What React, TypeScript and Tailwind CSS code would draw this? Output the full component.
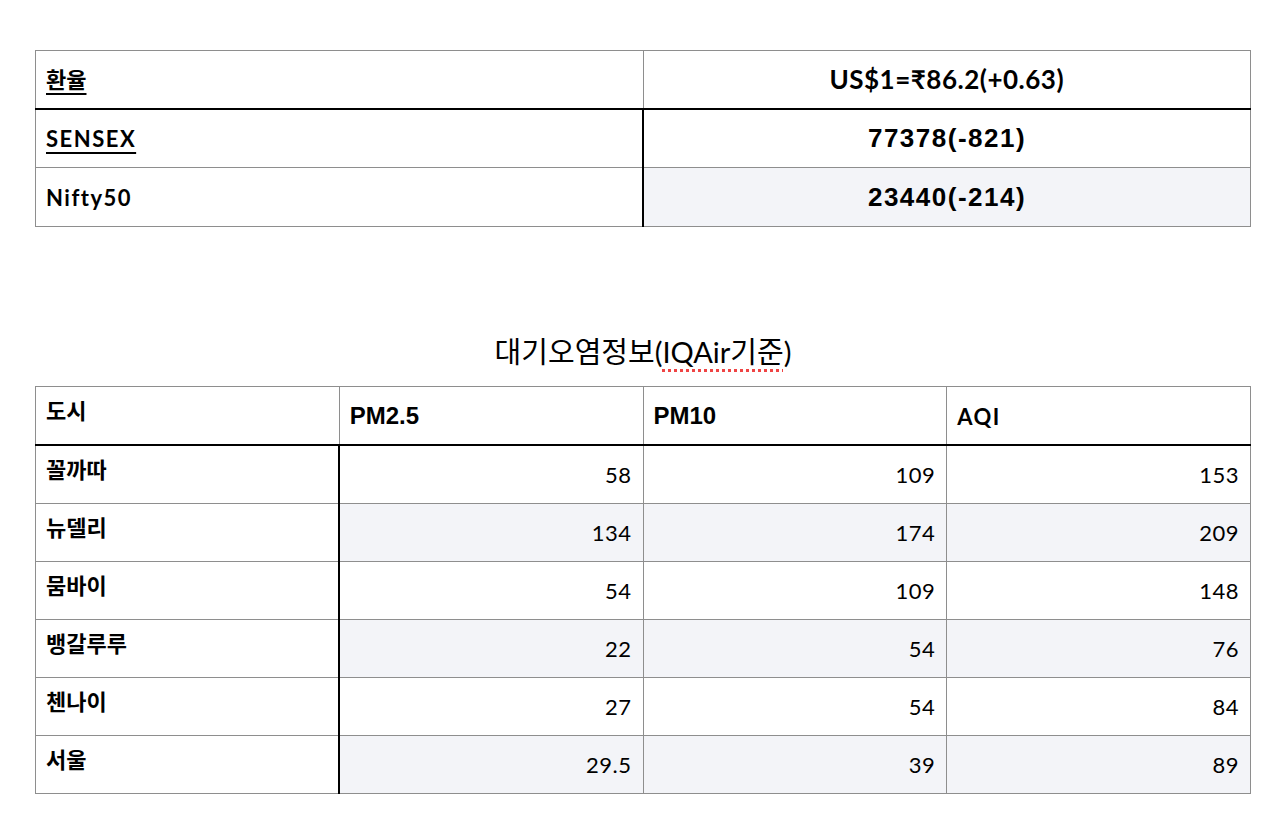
const kr = "font-['Lato','Noto_Sans_CJK_KR',sans-serif]";

const rates = [
  { label: "환율", value: "US$1=₹86.2(+0.63)", link: true, latin: false, h: "h-[58px]", cls: "font-['Lato','DejaVu_Sans',sans-serif] font-bold text-[26px] tracking-[0.5px]" },
  { label: "SENSEX", value: "77378(-821)", link: true, latin: true, h: "h-[59px]", cls: "font-['Liberation_Sans',sans-serif] font-bold text-[26px] tracking-[1.5px]" },
  { label: "Nifty50", value: "23440(-214)", link: false, latin: true, h: "h-[59px]", cls: "font-['Liberation_Sans',sans-serif] font-bold text-[26px] tracking-[1.5px]" },
];

const air = [
  { city: "꼴까따", pm25: "58", pm10: "109", aqi: "153" },
  { city: "뉴델리", pm25: "134", pm10: "174", aqi: "209" },
  { city: "뭄바이", pm25: "54", pm10: "109", aqi: "148" },
  { city: "뱅갈루루", pm25: "22", pm10: "54", aqi: "76" },
  { city: "첸나이", pm25: "27", pm10: "54", aqi: "84" },
  { city: "서울", pm25: "29.5", pm10: "39", aqi: "89" },
];

const heads = [
  { h: "PM2.5", cls: "font-['Liberation_Sans',sans-serif] text-[24px]" },
  { h: "PM10", cls: "font-['Liberation_Sans',sans-serif] text-[24px]" },
  { h: "AQI", cls: "text-[22px] tracking-[1.5px]" },
];

export default function App() {
  return (
    <div className={`min-h-screen bg-white text-black ${kr}`}>
      <div className="px-[35px] pt-[50px]">
        {/* market table */}
        <table className="w-full table-fixed border-collapse">
          <tbody>
            {rates.map((r, i) => {
              const first = i === 0;
              const striped = i === 2;
              return (
                <tr key={r.label} className={r.h}>
                  <td
                    className={`border border-[#8e8e8e] px-[10px] align-middle text-[22px] font-bold ${
                      r.latin ? "tracking-[1.5px]" : ""
                    } ${first ? "border-b-2 border-b-black" : ""} ${!first ? "border-r-2 border-r-black" : ""}`}
                  >
                    <span className={r.link ? "underline decoration-[1.5px] underline-offset-[5px]" : ""}>{r.label}</span>
                  </td>
                  <td
                    className={`border border-[#8e8e8e] px-[10px] text-center align-middle ${r.cls} ${
                      first ? "border-b-2 border-b-black" : ""
                    } ${!first ? "border-l-2 border-l-black" : ""} ${striped ? "bg-[#f3f4f8]" : ""}`}
                  >
                    {r.value}
                  </td>
                </tr>
              );
            })}
          </tbody>
        </table>

        {/* air quality */}
        <div className="mt-[108px] mb-[17px] text-center text-[29px] leading-[34px]">
          대기오염정보(
          <span className="underline decoration-[#ef4444] decoration-dotted decoration-[3px] underline-offset-[6px]">IQAir기준</span>)
        </div>
        <table className="w-full table-fixed border-collapse">
          <thead>
            <tr className="h-[58px]">
              <th className="border border-[#8e8e8e] border-b-2 border-b-black px-[10px] pb-[10px] text-left align-middle text-[22px] font-bold">
                도시
              </th>
              {heads.map(({ h, cls }) => (
                <th
                  key={h}
                  className={`border border-[#8e8e8e] border-b-2 border-b-black px-[10px] pt-[2px] text-left align-middle font-bold ${cls}`}
                >
                  {h}
                </th>
              ))}
            </tr>
          </thead>
          <tbody>
            {air.map((a, i) => {
              const bg = i % 2 === 1 ? "bg-[#f3f4f8]" : "";
              return (
                <tr key={a.city} className={i === 0 ? "h-[59px]" : "h-[58px]"}>
                  <td className="border border-[#8e8e8e] border-r-2 border-r-black px-[10px] pb-[10px] align-middle text-[22px] font-bold">
                    {a.city}
                  </td>
                  {[a.pm25, a.pm10, a.aqi].map((v, j) => (
                    <td
                      key={j}
                      className={`border border-[#8e8e8e] px-[11px] text-right align-middle text-[22px] tracking-[0.5px] ${bg} ${
                        j === 0 ? "border-l-2 border-l-black" : ""
                      }`}
                    >
                      {v}
                    </td>
                  ))}
                </tr>
              );
            })}
          </tbody>
        </table>
      </div>
    </div>
  );
}
